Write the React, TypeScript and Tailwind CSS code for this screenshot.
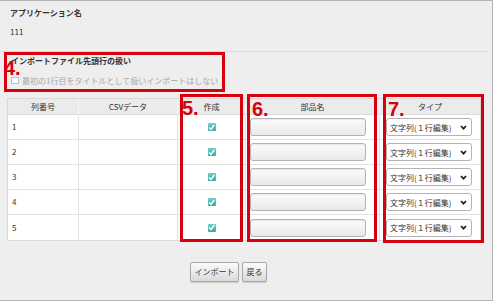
import React from "react";

const rows = [1, 2, 3, 4, 5];

function CheckedBox() {
  return (
    <span className="flex items-center justify-center w-[8px] h-[8px] rounded-[1px] bg-gradient-to-b from-[#6fd0c8] to-[#3aa9a4]">
      <svg width="7" height="7" viewBox="0 0 7 7">
        <polyline points="1,3.5 3,5.5 6.2,1" fill="none" stroke="white" strokeWidth="1.4" />
      </svg>
    </span>
  );
}

function Chevron() {
  return (
    <svg width="7" height="5" viewBox="0 0 7 5">
      <polyline points="1,1 3.5,3.6 6,1" fill="none" stroke="#222" strokeWidth="1.8" />
    </svg>
  );
}

export default function App() {
  return (
    <div className="relative w-[495px] h-[302px] bg-white font-['Noto_Sans_CJK_JP','Liberation_Sans',sans-serif] text-[8px] text-[#333]">
      <div className="w-[493px] h-[301px] border border-l-0 border-[#b4b4b4] bg-[#eeeeee]">
        {/* app name */}
        <div className="h-[50px] pl-[10px] pt-[6px]">
          <p className="font-bold leading-[11px]">アプリケーション名</p>
          <p className="mt-[8px] leading-[11px]">111</p>
        </div>
        <div className="h-px bg-[#dadada] mr-[4px]" />

        {/* first-line option */}
        <div className="h-[40px] pl-[11px] pt-[3px]">
          <p className="font-bold leading-[11px]">インポートファイル先頭行の扱い</p>
          <label className="mt-[9px] flex items-center gap-[3px] leading-[11px] text-[#a8a8a8]">
            <span className="w-[8px] h-[7px] border border-[#a9c7d6] bg-white" />
            最初の1行目をタイトルとして扱いインポートはしない
          </label>
        </div>

        {/* table */}
        <div className="ml-[7px] mt-[6px] w-[474px] border border-[#d9d9d9] bg-white">
          <div className="grid grid-cols-[71px_99px_68px_134px_100px]">
            {["列番号", "CSVデータ", "作成", "部品名", "タイプ"].map((h, i) => (
              <div
                key={h}
                className={`h-[16px] flex items-center justify-center bg-[#ebebeb] border-b border-[#dcdcdc] ${
                  i < 4 ? "border-r border-r-[#f7f7f7]" : ""
                }`}
              >
                {h}
              </div>
            ))}
            {rows.map((n) => (
              <React.Fragment key={n}>
                <div className={`h-[25px] flex items-center pl-[4px] border-r border-[#e2e2e2] ${n < 5 ? "border-b" : ""}`}>
                  {n}
                </div>
                <div className={`h-[25px] border-r border-[#e2e2e2] ${n < 5 ? "border-b" : ""}`} />
                <div className={`h-[25px] flex items-center justify-center border-r border-[#e2e2e2] ${n < 5 ? "border-b" : ""}`}>
                  <CheckedBox />
                </div>
                <div className={`h-[25px] flex items-center pl-[4px] border-r border-[#e2e2e2] ${n < 5 ? "border-b" : ""}`}>
                  <div className="w-[116px] h-[18px] rounded-[3px] border border-[#b3b3b3] bg-gradient-to-b from-[#fbfbfb] to-[#e9e9e9] shadow-[inset_0_1px_1px_rgba(0,0,0,0.08)]" />
                </div>
                <div className={`h-[25px] flex items-center pl-[6px] border-[#e2e2e2] ${n < 5 ? "border-b" : ""}`}>
                  <div className="w-[86px] h-[18px] flex items-center justify-between pl-[3px] pr-[4px] rounded-[3px] border border-[#b3b3b3] bg-white">
                    <span className="leading-[11px]">文字列(１行編集)</span>
                    <Chevron />
                  </div>
                </div>
              </React.Fragment>
            ))}
          </div>
        </div>

        {/* buttons */}
        <div className="mt-[21px] ml-[190px] flex gap-[3px]">
          <button className="w-[49px] h-[20px] rounded-[2px] border border-[#a9a9a9] bg-gradient-to-b from-[#fbfbfb] to-[#dadada] text-[8px] text-[#333] shadow-[0_1px_1px_rgba(0,0,0,0.15)]">
            インポート
          </button>
          <button className="w-[25px] h-[20px] rounded-[2px] border border-[#a9a9a9] bg-gradient-to-b from-[#fbfbfb] to-[#dadada] text-[8px] text-[#333] shadow-[0_1px_1px_rgba(0,0,0,0.15)]">
            戻る
          </button>
        </div>
      </div>

      {/* annotation boxes */}
      <div className="absolute left-[4px] top-[52px] w-[221px] h-[40px] border-[3px] border-[#d7000f]" />
      <div className="absolute left-[180px] top-[94px] w-[63px] h-[148px] border-[3px] border-[#d7000f]" />
      <div className="absolute left-[247px] top-[94px] w-[130px] h-[148px] border-[3px] border-[#d7000f]" />
      <div className="absolute left-[383px] top-[94px] w-[101px] h-[149px] border-[3px] border-[#d7000f]" />

      {/* annotation numbers */}
      <span className="absolute left-[4px] top-[58px] text-[20px] leading-[20px] font-bold text-[#d7000f] font-['Liberation_Sans',sans-serif]">4.</span>
      <span className="absolute left-[182px] top-[98px] text-[20px] leading-[20px] font-bold text-[#d7000f] font-['Liberation_Sans',sans-serif]">5.</span>
      <span className="absolute left-[252px] top-[99px] text-[20px] leading-[20px] font-bold text-[#d7000f] font-['Liberation_Sans',sans-serif]">6.</span>
      <span className="absolute left-[388px] top-[99px] text-[20px] leading-[20px] font-bold text-[#d7000f] font-['Liberation_Sans',sans-serif]">7.</span>
    </div>
  );
}
